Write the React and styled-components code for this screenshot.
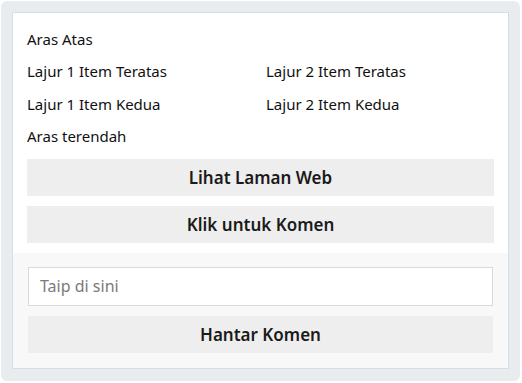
import React from "react";
import styled, { createGlobalStyle } from "styled-components";

const Global = createGlobalStyle`
  html, body { margin: 0; padding: 0; background: #ffffff; }
  body { font-family: "Noto Sans", "Open Sans", sans-serif; color: #111; }
  * { box-sizing: border-box; }
`;

const Frame = styled.div`
  margin: 1px 0 0 1px;
  width: 519px;
  height: 380px;
  padding: 11px;
  background: #e9ecef;
  border-radius: 6px;
`;

const Panel = styled.div`
  border: 1px solid #d5dde5;
  background: #ffffff;
  display: flex;
  flex-direction: column;
  height: 357px;
`;

const TopSection = styled.div`
  padding: 15.5px 14px 10px;
  display: flex;
  flex-direction: column;
`;

const List = styled.div`
  display: grid;
  grid-template-columns: 1fr 1fr;
  column-gap: 11px;
  row-gap: 12.5px;
  margin-bottom: 12.5px;
`;

const Item = styled.div`
  font-size: 15px;
  line-height: 20px;
  grid-column: ${(p) => (p.$full ? "1 / -1" : "auto")};
`;

const Button = styled.button`
  display: block;
  width: 100%;
  height: 37px;
  border: none;
  background: #eeeeee;
  font-family: "Noto Sans", "Open Sans", sans-serif;
  font-size: 17px;
  font-weight: 600;
  color: #1a1a1a;
  cursor: pointer;
  padding: 0;
  & + & { margin-top: 10px; }
`;

const BottomSection = styled.div`
  flex: 1;
  background: #f8f8f8;
  padding: 14px 15px 15px;
  display: flex;
  flex-direction: column;
  gap: 10px;
`;

const Input = styled.input`
  display: block;
  width: 100%;
  height: 39px;
  border: 1px solid #dadada;
  background: #ffffff;
  padding: 0 11px;
  font-family: "Noto Sans", "Open Sans", sans-serif;
  font-size: 16px;
  color: #222;
  outline: none;
  &::placeholder { color: #7a7a7a; }
`;

export default function App() {
  return (
    <>
      <Global />
      <Frame>
        <Panel>
          <TopSection>
            <List>
              <Item $full>Aras Atas</Item>
              <Item>Lajur 1 Item Teratas</Item>
              <Item>Lajur 2 Item Teratas</Item>
              <Item>Lajur 1 Item Kedua</Item>
              <Item>Lajur 2 Item Kedua</Item>
              <Item $full>Aras terendah</Item>
            </List>
            <Button>Lihat Laman Web</Button>
            <Button>Klik untuk Komen</Button>
          </TopSection>
          <BottomSection>
            <Input placeholder="Taip di sini" />
            <Button>Hantar Komen</Button>
          </BottomSection>
        </Panel>
      </Frame>
    </>
  );
}
